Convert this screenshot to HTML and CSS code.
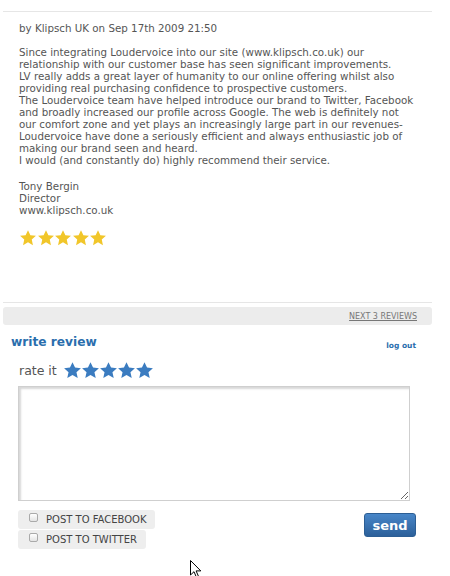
FILE: index.html
```html
<!DOCTYPE html>
<html>
<head>
<meta charset="utf-8">
<link rel="stylesheet" href="styles.css">
</head>
<body>
<div class="page">
  <div class="review">
    <p class="meta">by Klipsch UK on Sep 17th 2009 21:50</p>
    <p class="body">Since integrating Loudervoice into our site (www.klipsch.co.uk) our<br>relationship with our customer base has seen significant improvements.<br>LV really adds a great layer of humanity to our online offering whilst also<br>providing real purchasing confidence to prospective customers.<br>The Loudervoice team have helped introduce our brand to Twitter, Facebook<br>and broadly increased our profile across Google. The web is definitely not<br>our comfort zone and yet plays an increasingly large part in our revenues-<br>Loudervoice have done a seriously efficient and always enthusiastic job of<br>making our brand seen and heard.<br>I would (and constantly do) highly recommend their service.</p>
    <p class="sig">Tony Bergin<br>Director<br>www.klipsch.co.uk</p>
    <div class="stars gold">
      <svg viewBox="0 0 24 24"><polygon points="12,1.5 15.2,8.3 22.6,9.1 17,14.1 18.6,21.5 12,17.7 5.4,21.5 7,14.1 1.4,9.1 8.8,8.3"/></svg>
      <svg viewBox="0 0 24 24"><polygon points="12,1.5 15.2,8.3 22.6,9.1 17,14.1 18.6,21.5 12,17.7 5.4,21.5 7,14.1 1.4,9.1 8.8,8.3"/></svg>
      <svg viewBox="0 0 24 24"><polygon points="12,1.5 15.2,8.3 22.6,9.1 17,14.1 18.6,21.5 12,17.7 5.4,21.5 7,14.1 1.4,9.1 8.8,8.3"/></svg>
      <svg viewBox="0 0 24 24"><polygon points="12,1.5 15.2,8.3 22.6,9.1 17,14.1 18.6,21.5 12,17.7 5.4,21.5 7,14.1 1.4,9.1 8.8,8.3"/></svg>
      <svg viewBox="0 0 24 24"><polygon points="12,1.5 15.2,8.3 22.6,9.1 17,14.1 18.6,21.5 12,17.7 5.4,21.5 7,14.1 1.4,9.1 8.8,8.3"/></svg>
    </div>
  </div>
  <div class="pager"><a href="#" class="next">NEXT 3 REVIEWS</a></div>
  <div class="write">
    <div class="write-head">
      <h2 class="write-title">write review</h2>
      <a href="#" class="logout">log out</a>
    </div>
    <div class="rate">
      <span class="rate-label">rate it</span>
      <div class="stars blue">
        <svg viewBox="0 0 24 24"><polygon points="12,1.5 15.2,8.3 22.6,9.1 17,14.1 18.6,21.5 12,17.7 5.4,21.5 7,14.1 1.4,9.1 8.8,8.3"/></svg>
        <svg viewBox="0 0 24 24"><polygon points="12,1.5 15.2,8.3 22.6,9.1 17,14.1 18.6,21.5 12,17.7 5.4,21.5 7,14.1 1.4,9.1 8.8,8.3"/></svg>
        <svg viewBox="0 0 24 24"><polygon points="12,1.5 15.2,8.3 22.6,9.1 17,14.1 18.6,21.5 12,17.7 5.4,21.5 7,14.1 1.4,9.1 8.8,8.3"/></svg>
        <svg viewBox="0 0 24 24"><polygon points="12,1.5 15.2,8.3 22.6,9.1 17,14.1 18.6,21.5 12,17.7 5.4,21.5 7,14.1 1.4,9.1 8.8,8.3"/></svg>
        <svg viewBox="0 0 24 24"><polygon points="12,1.5 15.2,8.3 22.6,9.1 17,14.1 18.6,21.5 12,17.7 5.4,21.5 7,14.1 1.4,9.1 8.8,8.3"/></svg>
      </div>
    </div>
    <textarea class="text"></textarea>
    <div class="actions">
      <div class="shares">
        <label class="share"><span class="box"></span>POST TO FACEBOOK</label>
        <label class="share"><span class="box"></span>POST TO TWITTER</label>
      </div>
      <button class="send">send</button>
    </div>
  </div>
  <svg class="cursor" viewBox="0 0 12 19" width="12" height="19"><path d="M0.5,0.5 L0.5,15 L4,11.7 L6.5,17.5 L8.6,16.6 L6.1,10.9 L10.8,10.9 Z" fill="#fff" stroke="#000" stroke-width="1"/></svg>
</div>
</body>
</html>
```

FILE: styles.css
```css
html, body {
  margin: 0;
  padding: 0;
  background: #fff;
}
.page {
  position: relative;
  width: 450px;
  height: 576px;
  font-family: "DejaVu Sans", Verdana, sans-serif;
  color: #555;
}
.review {
  margin: 11px 18px 0 3px;
  border-top: 1px solid #e6e6e6;
  padding: 10px 0 0 16px;
  height: 292px;
  box-sizing: border-box;
  border-bottom: 1px solid #e6e6e6;
}
.meta, .body, .sig {
  margin: 0;
  font-size: 10.3px;
  line-height: 12px;
}
.body {
  margin-top: 12px;
}
.sig {
  margin-top: 14px;
}
.stars {
  display: flex;
}
.stars svg {
  display: block;
}
.gold {
  margin-top: 13px;
}
.gold svg {
  width: 18px;
  height: 18px;
  margin-right: -0.5px;
  fill: #f1c62a;
}
.pager {
  margin: 4px 18px 0 3px;
  height: 18px;
  background: #ececec;
  border-radius: 3px;
  display: flex;
  justify-content: flex-end;
  align-items: center;
  padding-right: 15px;
}
.next {
  font-size: 8px;
  color: #777;
  text-decoration: underline;
}
.write {
  padding: 0 0 0 11px;
  width: 405px;
}
.write-head {
  display: flex;
  justify-content: space-between;
  align-items: flex-end;
  margin-top: 9px;
}
.write-title {
  margin: 0;
  font-size: 12.2px;
  line-height: 16px;
  font-weight: bold;
  color: #2a6ead;
}
.logout {
  font-size: 7.5px;
  font-weight: bold;
  color: #2a6ead;
  text-decoration: none;
}
.rate {
  display: flex;
  align-items: center;
  margin: 11px 0 0 8px;
  gap: 6px;
}
.rate-label {
  font-size: 12.5px;
  color: #555;
}
.blue svg {
  width: 19px;
  height: 19px;
  margin-right: -1px;
  fill: #3b7cc0;
}
.text {
  display: block;
  margin: 6px 0 0 7px;
  width: 392px;
  height: 115px;
  box-sizing: border-box;
  border: 1px solid #cfcfcf;
  box-shadow: inset 2px 2px 2px #d8d8d8;
  padding: 2px;
}
.actions {
  display: flex;
  justify-content: space-between;
  align-items: flex-start;
  margin: 9px 0 0 7px;
}
.shares {
  display: flex;
  flex-direction: column;
  align-items: flex-start;
  gap: 1px;
}
.share {
  display: flex;
  align-items: center;
  background: #eeeeee;
  border-radius: 3px;
  height: 19px;
  padding: 0 9px 0 11px;
  font-size: 10px;
  color: #444;
}
.box {
  width: 7px;
  height: 7px;
  border: 1px solid #aaa;
  border-radius: 2px;
  background: linear-gradient(#fff, #e4e4e4);
  margin-right: 8px;
  margin-top: -4px;
}
.send {
  margin-top: 3px;
  width: 52px;
  height: 24px;
  border: 1px solid #2c5e94;
  border-radius: 3px;
  background: linear-gradient(#4886c8, #2c609a);
  color: #fff;
  font-family: "DejaVu Sans", Verdana, sans-serif;
  font-size: 13px;
  font-weight: bold;
  padding: 0;
}
.cursor {
  position: absolute;
  left: 190px;
  top: 549px;
}
```
